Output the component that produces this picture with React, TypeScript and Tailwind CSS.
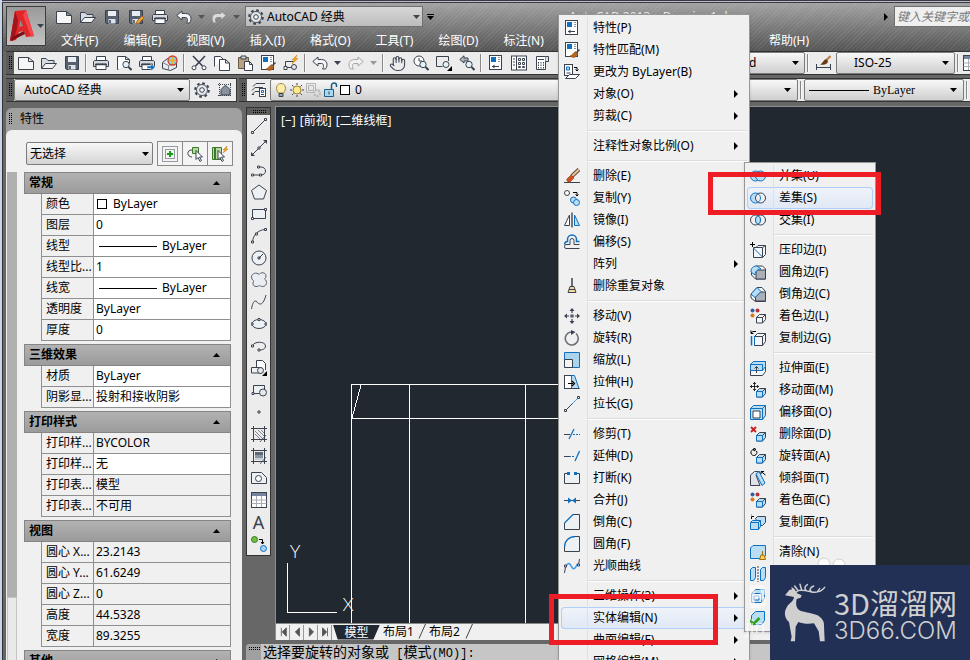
import type { ReactNode } from 'react';
import { Hand } from 'lucide-react';

const D = '#3a4250';
const B = '#0f6fc0';
const L = '#b9def3';

const cube = (
  <>
    <path d="M6.5 9.5l3-3h6v5l-3 3.5h-6z" fill={L} stroke={D} />
    <path d="M6.5 9.5h6v5.5h-6z" fill={L} stroke={B} />
    <path d="M12.5 9.5l3-3" stroke={D} />
  </>
);

const dots = (
  <>
    <circle cx="2.5" cy="2.5" r="2" fill="#2c63a8" stroke="none" />
    <circle cx="7.5" cy="2.5" r="2" fill="#b8323c" stroke="none" />
    <circle cx="2.5" cy="7.5" r="2" fill="#e07818" stroke="none" />
  </>
);

const brush = (
  <>
    <path d="M15.5 7.5l-4 4" stroke={D} strokeWidth="1.5" />
    <path d="M11.5 9.5l2.5 2-2 3c-2 1.5-4 1-6-.5 2-.5 3-3 5.500-4.500z" fill="#b5651d" stroke="#8a4a10" strokeWidth=".5" />
  </>
);

const lens = (
  <>
    <circle cx="10" cy="9.5" r="3.2" fill="#e4f1f5" />
    <path d="M12.5 12l3 3" strokeWidth="2" />
  </>
);

const sheet = (
  <>
    <rect x="1.5" y=".5" width="12" height="14" fill="#fff" />
    <rect x="3" y="2" width="5" height="5" fill={B} stroke="none" />
    <path d="M10 2.5h2M10 4.5h2M10 6.5h2" stroke="#8b95a2" />
  </>
);

const printer = (
  <>
    <path d="M3.5 6V1.5h9V6" fill="#fff" />
    <path d="M.5 6.5l1-1h13l1 1v5h-15z" fill="#d5d9de" />
    <path d="M3 9h10v5.5H3z" fill="#fff" />
    <path d="M2 9.5h12" strokeWidth="1.5" />
  </>
);

const undo = <path d="M6 2L.8 6.5 6 11V8.500h3.500c2.500 0 2.500 3.500 1 5.500h3c3-4 1.500-9.500-4-9.500H6z" fill="#f4f4f4" />;

const floppy = (
  <>
    <path d="M1.5 1.5h13v13h-12l-1-1z" fill="#56606e" />
    <path d="M4 2h8v5H4z" fill="#e9edf1" stroke="none" />
    <path d="M4.5 10h7v4.5h-7z" fill="#dfe3e8" stroke="none" />
    <path d="M6 11v3" strokeWidth="1.5" />
  </>
);

const rings = (
  <>
    <circle cx="5.5" cy="8" r="5" />
    <circle cx="10.5" cy="8" r="5" />
  </>
);

const cubeFace = 'M1.5 5.5l4-4h9v9l-3 4h-10z';

const ICONS: Record<string, ReactNode> = {
  new: <path d="M.5 2.5h10l5 4v8H.5zM10.5 2.5v4h5" fill="#f6f6f6" />,
  open: (
    <>
      <path d="M.5 13V3.5h4.5l2 2h6v3" fill="#d8dce0" />
      <path d="M.5 13.5l4-5h11l-4 5z" fill="#f2f2f2" />
    </>
  ),
  save: floppy,
  saveAs: (
    <>
      {floppy}
      <path d="M8 15l1-3 5-5 2 2-5 5z" fill="#f0a02c" stroke="#9a5a14" strokeWidth=".7" />
    </>
  ),
  print: printer,
  preview: (
    <>
      <path d="M2.5 14.5h-1v-13h8l4 3v4M9.5 1.5v3h4" fill="#fff" />
      {lens}
    </>
  ),
  publish: (
    <>
      {printer}
      <path d="M8 11h4V8.5l4 4-4 3.5v-2.5H8z" fill={B} stroke="#fff" strokeWidth=".5" />
    </>
  ),
  globe: (
    <>
      <path d="M.5 7.5l5-4 9 4v5l-6 3-8-2z" fill="#e8ebee" />
      <path d="M.5 7.5l6 3 8-3M6.5 10.500V15" stroke="#7c8490" />
      <circle cx="10.5" cy="5.5" r="4.5" fill="#7fd0e8" stroke="#d83a2a" strokeWidth="1.3" />
      <path d="M7 5.5h7M10.5 2v7" stroke="#f0b020" strokeWidth="1.3" />
    </>
  ),
  cut: (
    <>
      <path d="M2 1l9.5 10M14 1L4.5 11" strokeWidth="1.6" />
      <circle cx="3" cy="12.8" r="2" fill="#fff" />
      <circle cx="13" cy="12.8" r="2" fill="#fff" />
    </>
  ),
  copy: (
    <>
      <path d="M.5 11.5v-10h6l3 3" fill="#fff" />
      <path d="M5.5 4.5h6l4 3.500v7.500h-10zM11.5 4.5V8h4" fill="#fff" />
    </>
  ),
  paste: (
    <>
      <path d="M1.5 2.5h10v11h-10z" fill="#b9a183" stroke="#6b5a44" />
      <path d="M4 1h5v3H4z" fill="#d0d4d8" />
      <path d="M7.5 6.5h5l3 3v6h-8zM12.5 6.5v3h3" fill="#fff" />
    </>
  ),
  match: (
    <>
      {sheet}
      {brush}
    </>
  ),
  blockEdit: (
    <>
      <path d="M2.5 13V6.5h8" />
      <path d="M2.5 12.5h8" />
      <path d="M1 11.5h3v3H1z" fill="#fff" />
      <circle cx="11" cy="12" r="2.5" fill="#e4e8ec" />
      <path d="M14 0l-5 5h2.500L9 9l6-5.500h-2.500z" fill="#f6a51c" stroke="#c9780a" strokeWidth=".5" />
    </>
  ),
  undo,
  redo: (
    <g transform="matrix(-1 0 0 1 16 0)" stroke="#8c8c8c" opacity=".75">
      {undo}
    </g>
  ),
  gear: (
    <>
      <circle cx="8" cy="8" r="6.8" strokeWidth="2" strokeDasharray="2.7 2.640" />
      <circle cx="8" cy="8" r="5.5" fill="#e6e8ea" strokeWidth=".9" />
      <circle cx="8" cy="8" r="2.3" fill="#f6f6f6" />
    </>
  ),
  zoomLive: (
    <>
      <circle cx="6" cy="6" r="5" fill="#fff" />
      <path d="M6 3v3h3" />
      {lens}
    </>
  ),
  zoomWindow: (
    <>
      <path d="M12.5 6V1.5H.5v10h6" />
      <circle cx="10" cy="9.5" r="3" fill="#e4f1f5" />
      <path d="M16 11v5h-5z" fill="#000" stroke="none" />
    </>
  ),
  zoomPrev: (
    <>
      <path d="M5 .8L.8 4.5 5 8V6h4V3H5z" fill="#aab2bc" />
      {lens}
    </>
  ),
  props: (
    <>
      {sheet}
      <path d="M4 11.5h7" />
      <path d="M6.5 9.5l-2.5 2 2.5 2z" fill={D} stroke="none" />
    </>
  ),
  design: (
    <>
      <rect x=".5" y="1" width="15" height="14" fill="#fff" />
      <path d="M5.5 1v14M2 4h2M2 7h2M2 10h2" />
      <path d="M7.5 3.5h2v2h-2zM11.5 3.5h2v2h-2zM7.5 7.5h2v2h-2zM11.5 7.5h2v2h-2zM7.5 11.5h2v1h-2zM11.5 11.5h2v1h-2z" />
    </>
  ),
  palette: (
    <>
      <path d="M2.5 1.5h9v13h-9z" fill="#fff" />
      <path d="M4 4.5h6" />
      <path d="M11.5 1.500h3v5h-3" fill="#dfe3e8" />
      <path d="M4.5 7v7M7 7v7M9.500 7v7" strokeDasharray="1.500 1" />
    </>
  ),
  house: (
    <>
      <path d="M1 2.5h14M1 13.5h14M2.5 1v14M13.5 1v14" strokeDasharray="1 1" />
      <path d="M4 7.5l4-4 2 1 3 3v5.500H4z" fill="#8a929c" />
    </>
  ),
  layers: (
    <>
      <path d="M2 4.500l3-3h9M1 8.500l3-3h8M3 12.500H1l3-3h4" />
      <rect x="8.5" y="6.5" width="6" height="8" fill="#fff" stroke={D} />
      <path d="M10.500 8.500h2v2h-2z" stroke={B} />
      <path d="M10 12.500h3" />
    </>
  ),
  bulb: (
    <>
      <path d="M5.5 11C2 7 3.500 1.500 8 1.500s6 5.500 2.500 9.500z" fill="#ffeeaa" stroke="#a08436" />
      <path d="M6 11.500h4v3H6z" fill="#9aa2ac" />
    </>
  ),
  sun: (
    <>
      <path d="M8 1v2M8 13v2M1 8h2M13 8h2M3 3l1.500 1.500M11.500 11.500L13 13M13 3l-1.500 1.500M4.500 11.500L3 13" />
      <circle cx="8" cy="8" r="4" fill="#ffe98a" stroke="#a08436" />
    </>
  ),
  freeze: (
    <g stroke="#b5b5b5">
      <path d="M.5 1.500h9v9h-9zM2.500 3.500h5v5h-5z" />
      <circle cx="11" cy="11" r="3" fill="#ddd" strokeWidth="2" strokeDasharray="2 1" />
    </g>
  ),
  lock: (
    <>
      <path d="M8.500 7V3.500a2.500 2.500 0 015 0V5" strokeWidth="1.500" stroke="#1d5f86" />
      <path d="M1.500 7.500h9v7h-9z" fill="#a9d8f0" stroke="#1d5f86" />
      <path d="M6 9.500v3" />
    </>
  ),
  dim: (
    <>
      <path d="M1.5 9v6M15.5 9v6M2 12.5h13" />
      <path d="M15.5 1l-4 4" stroke="#c47a3a" strokeWidth="2" />
      <path d="M11 4l2 2c0 3-4 4.500-8 3.500C8 8.500 8 5 11 4z" fill="#6b3c14" stroke="none" />
    </>
  ),
  table: (
    <>
      <rect x=".5" y=".500" width="15" height="15" fill="#fff" />
      <path d="M1 2.500h14" stroke="#7684a0" strokeWidth="3" />
      <path d="M.5 8h15M.5 11.500h15M5.5 4v11M10.5 4v11" stroke="#a6adb6" />
    </>
  ),
  pick: (
    <>
      <path d="M.5 15.5V.5h15v15z" strokeDasharray="1 1" />
      <path d="M3.5 3.5h9v9h-9z" strokeDasharray="1 1" />
      <path d="M8 5v6M5 8h6" stroke="#11a011" strokeWidth="2" />
    </>
  ),
  select: (
    <>
      <path d="M5.5 1.5h6v6h-6z" fill="#b9d8a4" stroke="#3a7a2a" />
      <path d="M5 4C-1 4 0 11 5 11" />
      <path d="M9 4.5v9l2-2 2 4 1.500-1-2-3.500h3z" fill="#fff" />
    </>
  ),
  quick: (
    <>
      <path d="M.5 1.5h9v12h-9z" fill="#b9d8a4" stroke="#3a7a2a" />
      <path d="M3 2v11" stroke="#3a7a2a" strokeWidth="2" />
      <path d="M15 0l-4 4h2l-2 3 5-4h-2z" fill="#f6a51c" stroke="#c9780a" strokeWidth=".5" />
      <path d="M6 4.5v9l2-2 2 4 1.500-1-2-3.500h3z" fill="#fff" />
    </>
  ),
  // draw toolbar
  line: (
    <>
      <path d="M1.5 14.5l13-13" />
      <path d="M.5 13.5h2v2h-2zM13.500.500h2v2h-2z" fill="#fff" />
    </>
  ),
  xline: (
    <>
      <path d="M2 14L14 2" />
      <path d="M0 16v-4l4 4zM16 0v4l-4-4z" fill={D} stroke="none" />
      <path d="M7 7h2v2H7z" fill="#fff" />
    </>
  ),
  pline: (
    <>
      <path d="M1 13h9c6 0 6-8 0-8H8" />
      <path d="M.5 12h2v2h-2zM8.500 12h2v2h-2zM6.500 4h2v2h-2z" fill="#fff" />
    </>
  ),
  polygon: <path d="M8 1l7.500 5.500-3 8.500h-9l-3-8.500z" fill="#eef1f4" />,
  rect: (
    <>
      <path d="M1.5 3.5h13v9h-13z" fill="#eef1f4" />
      <path d="M.5 11.5h2v2h-2zM13.500 2.500h2v2h-2z" fill="#fff" />
    </>
  ),
  arc: (
    <>
      <path d="M1.5 14C2 7 7 2 14 1.500" />
      <path d="M.5 13h2v2h-2zM13.500.500h2v2h-2zM4.500 5h2v2h-2z" fill="#fff" />
    </>
  ),
  circle: (
    <>
      <circle cx="8" cy="8" r="7" fill="#eef1f4" />
      <path d="M8 8l4-4M7 7h2v2H7z" />
    </>
  ),
  cloud: <path d="M8 2.500C9.500 0 15 0 15 4c0 2-1.500 3-1.500 3s2 1 2 3.500c0 4-4.500 5-7 3-3 2-7 1-6.500-2.500C2.200 9.500 3 9 3 9S.5 8 .5 5C.5 1 6 0 8 2.500z" fill="#eaedf1" stroke="#5c6470" />,
  spline: <path d="M.5 15c1-6 3-10 5.500-7s6 4 9-7" />,
  ellipse: (
    <>
      <ellipse cx="8" cy="8" rx="7" ry="4.5" fill="#eef1f4" />
      <path d="M0 7h2v2H0zM14 7h2v2h-2zM7 2.500h2v2H7z" fill="#fff" />
    </>
  ),
  earc: (
    <>
      <path d="M1.5 8c1-5 13-5 13 0 0 3-3 4-6 4" />
      <path d="M.5 7h2v2h-2zM7 11h2v2H7z" fill="#fff" />
    </>
  ),
  insert: (
    <>
      <path d="M5.5 7V.500h6l3 3V10" fill="#fff" />
      <path d="M.5 13V7.500h10v5.500z" fill="#eef1f4" />
      <circle cx="9.5" cy="10.5" r="3" fill="#e4e8ec" />
      <path d="M16 11v5h-5z" fill="#000" stroke="none" />
    </>
  ),
  block: (
    <>
      <path d="M2.5 3.5h11v8h-11z" fill="#eef1f4" />
      <circle cx="12" cy="10.5" r="3.5" fill="#e4e8ec" />
      <path d="M1 10.5h2v2H1z" fill="#fff" />
    </>
  ),
  point: <path d="M7 7h2v2H7z" />,
  hatch: (
    <>
      <path d="M0 2.5h16M0 13.5h16M2.5 0v16M13.5 0v16" />
      <path d="M4 5l8 8M4 8l5 5M7 4l6 6M10 4l3 3" strokeWidth=".6" />
      <path d="M9 16l6-7" strokeWidth=".8" />
    </>
  ),
  gradient: (
    <>
      <path d="M0 2.5h16M0 13.5h16M2.5 0v16M13.5 0v16" />
      <path d="M4 4h8v3H4z" fill="#5d6672" stroke="none" />
      <path d="M4 7h8v3H4z" fill="#8d959f" stroke="none" />
      <path d="M4 10h8v2H4z" fill="#c8ced5" stroke="none" />
      <path d="M9 16l6-7" strokeWidth=".8" />
    </>
  ),
  region: (
    <>
      <path d="M.5 2.5h10l5 5v6H.5z" fill="#eef1f4" />
      <circle cx="7.5" cy="8.5" r="3" fill="#fff" />
    </>
  ),
  add: (
    <>
      <circle cx="3.5" cy="3.5" r="3" fill="#6fbf3f" stroke="#3a7a2a" />
      <path d="M8 3.5h3.500V8M10 6l1.500 2L13 6" stroke="#000" />
      <circle cx="12.5" cy="12.5" r="3" fill="#a4d3f3" stroke={B} />
    </>
  ),
  // context menu
  byLayer: (
    <>
      <rect x=".5" y=".5" width="8" height="11" fill="#fff" />
      <path d="M2.500 3h3v3h-3z" fill={L} stroke={B} />
      <path d="M2.500 9h4" />
      <path d="M10 3.5h3V7M11.500 5.500L13 7l1.500-1.500" stroke="#000" />
      <path d="M1.500 14.500l4-4h10l-4 4z" fill="#fff" />
    </>
  ),
  erase: (
    <>
      <path d="M0 14.5h16" />
      <path d="M15 1.500L8 8" stroke="#5a4632" strokeWidth="4" />
      <path d="M15 1.500L8 8" stroke="#e8c49c" strokeWidth="2" />
      <path d="M7 7l3 3-4 4c-1.500 1-4-1.500-3-3z" fill="#d0501e" stroke="#8a3210" strokeWidth=".6" />
    </>
  ),
  duplicate: (
    <>
      <circle cx="3" cy="3" r="2.5" fill="#fff" />
      <path d="M9 2.500h4V6M11.500 4.500L13 6l1.500-1.500" stroke="#000" />
      <circle cx="9.5" cy="10" r="3" fill={L} stroke={B} />
      <circle cx="12.5" cy="12.5" r="3" fill={L} stroke={B} />
    </>
  ),
  mirror: (
    <>
      <path d="M5.5 3v10.500h-5z" fill="#fff" />
      <path d="M8 .5v15" stroke="#000" />
      <path d="M10.5 3v10.500h5z" fill={L} stroke={B} />
    </>
  ),
  offset: (
    <>
      <path d="M15.500 10.500H10V6.500a2 2 0 00-4 0v4H2q-1.500 0-1.500 2t1.500 2h13.500" />
      <path d="M.5 10.500q0-3 3-3V5.500a4.500 4.500 0 019 0v2h3" stroke={B} strokeWidth="1.500" />
    </>
  ),
  broom: (
    <>
      <path d="M8 0v8" strokeWidth="1.5" />
      <path d="M6 8.500h4l2 6H4z" fill="#f6d898" />
      <path d="M5 11.500h6" />
    </>
  ),
  move: (
    <>
      <path d="M8 2v3M8 11v3M2 8h3M11 8h3M7 7h2v2H7z" strokeWidth="1.200" />
      <path d="M8 0l2.500 3h-5zM8 16l2.500-3h-5zM0 8l3-2.500v5zM16 8l-3-2.500v5z" fill={D} stroke="none" />
    </>
  ),
  rotate: (
    <>
      <path d="M7 2A6.500 6.500 0 1012 3.500" stroke="#6a7078" strokeWidth="1.6" />
      <path d="M7 0l4.500 2L7 5z" fill={D} stroke="none" />
    </>
  ),
  scale: (
    <>
      <path d="M.5.500h15v15H.5z" fill="#a9d4ec" stroke={B} />
      <path d="M.5 7.500h8v8h-8z" fill="#f4f4f4" />
    </>
  ),
  stretch: (
    <>
      <path d="M.5 1.500h7v13h-7z" fill="#fff" />
      <path d="M7.500 1.500h3l4.500 13H7.500z" fill={L} stroke={B} />
      <path d="M.5 1.500h7M.5 1v14M.5 14.500h15" />
      <path d="M4 9.500h5M8 7l2.500 2.500L8 12" stroke="#000" strokeWidth="1.200" />
    </>
  ),
  lengthen: (
    <>
      <path d="M2 14l6-6" />
      <path d="M8 8l6-6" stroke={B} strokeDasharray="2 1" />
      <path d="M.5 13.5h2v2h-2zM13.500.500h2v2h-2z" fill="#fff" />
    </>
  ),
  trim: (
    <>
      <path d="M0 8.500h6" />
      <path d="M5 13L10 3" stroke={B} strokeWidth="1.3" />
      <path d="M9 8.500h7" stroke={B} strokeDasharray="2 1" />
    </>
  ),
  extend: (
    <>
      <path d="M0 8.500h5" />
      <path d="M5 8.500h6" stroke={B} strokeDasharray="2 1" />
      <path d="M11 13l4.500-10" stroke={B} strokeWidth="1.3" />
    </>
  ),
  break: (
    <>
      <path d="M4 3.500H.5v10h15v-10H12" fill="#eef1f4" />
      <path d="M3 2h3v3H3zM10 2h3v3h-3z" fill={B} stroke="none" />
    </>
  ),
  join: (
    <>
      <path d="M0 8.500h16" />
      <path d="M4 5.500l4 3-4 3zM12 5.500l-4 3 4 3z" fill={B} stroke="none" />
    </>
  ),
  chamfer: (
    <>
      <path d="M.5 9v6.500h15V.5H9" fill="#eef1f4" />
      <path d="M.5 9L9 .5" stroke={B} strokeWidth="1.3" />
    </>
  ),
  fillet: (
    <>
      <path d="M.5 11v4.500h15V.5H11" fill="#eef1f4" />
      <path d="M.5 11C.5 5 5 .5 11 .5" stroke={B} strokeWidth="1.3" />
    </>
  ),
  blend: (
    <>
      <path d="M.5 15l1-6M15.500 1l-1 6" />
      <path d="M2 8c5-8 5 6 9 2 2-2 1-3 3-4" stroke="#3b9be8" strokeWidth="1.5" />
      <path d="M.5 7h2v2h-2zM13.500 6h2v2h-2z" fill="#fff" />
    </>
  ),
  // solid editing
  union: (
    <g fill={L} stroke={B}>
      {rings}
    </g>
  ),
  subtract: (
    <>
      <circle cx="5.5" cy="8" r="5" fill={L} stroke={B} />
      <circle cx="10.5" cy="8" r="5" fill="#f0f0f0" />
      <path d="M8 3.700a5 5 0 010 8.600" stroke={B} />
    </>
  ),
  intersect: (
    <>
      {rings}
      <path d="M8 3.700a5 5 0 010 8.600 5 5 0 010-8.600z" fill={L} stroke={B} />
    </>
  ),
  imprint: (
    <>
      <path d="M3.5 5.5h9v10h-9zM6 5.500l2-2h7.500v9l-3 3M12.500 5.500l3-2" fill="#f4f6f8" />
      <path d="M3.5 6l9 9" stroke={B} />
      <path d="M2.500 0v5M0 2.500h5" stroke="#000" />
    </>
  ),
  filletEdge: (
    <>
      <path d="M1.5 6l4-4h7l3 3v10h-10l-4-4z" fill="#f4f6f8" />
      <path d="M6 15V9c0-2 1-3 3-3h6.500v9z" fill="#aab0b8" />
      <path d="M1 8c0-4 2-6 6-6l4 3c-4 0-6 3-6 6z" fill={L} stroke={B} />
    </>
  ),
  chamferEdge: (
    <>
      <path d="M1 8l6-6.500h5l3.500 4v10h-10L1 12z" fill="#f4f6f8" />
      <path d="M5.500 15v-4l5-5h5v9z" fill="#aab0b8" />
      <path d="M1 8l6-6.500 4 4-6 6z" fill={L} stroke={B} />
    </>
  ),
  colorEdge: (
    <>
      {dots}
      <path d="M6.500 9.500l3-3h6v5l-3 3.500h-6zM6.500 9.500h6v5.500M12.500 9.500l3-3" fill="#f4f6f8" />
    </>
  ),
  copyEdge: (
    <>
      <path d="M1.500 6v9.500" stroke={B} strokeWidth="1.500" />
      <path d="M4.500 6.500l3-3h8v8l-3 4h-8zM4.500 6.500h8v9M12.500 6.500l3-3" fill="#f4f6f8" />
      <path d="M4.500 6v9.500" stroke={B} />
      <path d="M1 3l2-1.500h3M1 .5v3h2.500" stroke="#000" />
    </>
  ),
  extrudeFace: (
    <>
      <path d="M.5 4.500l3-3h12v10l-3 4H.5z" fill="#f4f6f8" />
      <path d="M.5 4.500l3-3h12v5l-3 4H.5z" fill={L} stroke={B} />
      <path d="M.5 4.500h12v6" stroke={B} />
      <path d="M6.500 13V6.500M4.500 8.500l2-2 2 2" />
    </>
  ),
  moveFace: (
    <>
      {cube}
      <path d="M4.500 0v9M0 4.500h9M3 2l1.500-1.500L6 2M3 7l1.500 1.500L6 7M2 3L.5 4.500 2 6M7 3l1.500 1.500L7 6" stroke="#000" strokeWidth=".8" />
    </>
  ),
  offsetFace: (
    <>
      <path d="M.5 4.500l3-3h12v10l-3 4H.5z" fill={L} stroke={B} />
      <path d="M12.500 4.500l3-3M.5 4.500h12v11" stroke={B} />
      <path d="M3 7h7v7H3z" fill="#fff" />
    </>
  ),
  deleteFace: (
    <>
      {cube}
      <path d="M1 1l5 5M6 1L1 6" stroke="#c81e1e" strokeWidth="1.8" />
    </>
  ),
  rotateFace: (
    <>
      {cube}
      <path d="M4 1.500A3 3 0 106.500 3M4 0v3l2-1.500z" stroke="#000" />
    </>
  ),
  taperFace: (
    <>
      <path d="M.5 5l4-3.500h5L6 5l4 10.500H.5z" fill="#dfe3e8" />
      <path d="M6 4l3-2.500L15 13l-3 2.500z" fill={L} stroke={B} />
      <path d="M15.5 5L11 1.500M11 4V1.500h3" stroke="#000" />
    </>
  ),
  colorFace: (
    <>
      {cube}
      {dots}
    </>
  ),
  copyFace: (
    <>
      <path d="M5.500 4.500l2-2h8v6l-3 3h-3z" fill={L} stroke={D} />
      <path d="M.5 8.500l2-2h8v6l-2 3h-8zM.5 8.500h8v7M8.500 8.500l2-2" fill={L} stroke={B} />
      <path d="M1.500 5V2.500H4M1 1h.5" stroke="#000" />
    </>
  ),
  clean: (
    <>
      <path d="M.5 4l2.500-2.500h12.500v10l-2 3H.5z" fill={L} stroke={B} />
      <path d="M12.500 7v4M11 11h3l1.500 4.500h-6z" fill="#ffd04a" stroke="#a0700a" />
    </>
  ),
  separate: (
    <>
      <path d="M.5 3.500l2-2h3v10l-2 3h-3zM10.500 3.500l2-2h3v10l-2 3h-3z" fill={L} stroke={B} />
      <path d="M8 0v16" strokeDasharray="2 1" />
    </>
  ),
  shell: (
    <>
      <path d={cubeFace} fill={L} stroke={B} />
      <path d="M1.500 5.500h10v9M4 8h5v4H4z" fill="#e8f2f8" stroke={B} />
    </>
  ),
  check: (
    <>
      <path d={cubeFace} fill={L} stroke={B} />
      <path d="M0 10l3.500 4 6-6" stroke="#2fa01e" strokeWidth="2.5" />
    </>
  ),
};

function Icon({ name }: { name: string }) {
  return (
    <svg width="16" height="16" viewBox="0 0 16 16" fill="none" stroke={D} strokeWidth="1" className="shrink-0" aria-hidden="true">
      {ICONS[name]}
    </svg>
  );
}

function Down({ className = 'text-black' }: { className?: string }) {
  return (
    <svg width="7" height="4" viewBox="0 0 7 4" className={`shrink-0 ${className}`} aria-hidden="true">
      <path d="M0 0h7L3.5 4z" fill="currentColor" />
    </svg>
  );
}

function ToolButton({ name, label }: { name: string; label: string }) {
  return (
    <button type="button" aria-label={label} className="flex h-[22px] w-[23px] shrink-0 items-center justify-center">
      {name === 'hand' ? <Hand size={17} strokeWidth={1.5} color={D} /> : <Icon name={name} />}
    </button>
  );
}

function Arrow({ dim }: { dim?: boolean }) {
  return (
    <button type="button" aria-label="展开" className="flex h-[22px] w-[13px] shrink-0 items-center justify-center">
      <Down className={dim ? 'text-[#999]' : 'text-[#3a4250]'} />
    </button>
  );
}

function Divider() {
  return <div className="mx-[2px] h-[18px] w-[2px] shrink-0 border-l border-[#888] bg-[#f8f8f8]" />;
}

const DOTS = 'shrink-0 bg-[conic-gradient(#000_25%,transparent_0)] bg-[length:2px_2px]';

function Grip() {
  return (
    <div className="flex w-2 shrink-0 items-center justify-center self-stretch bg-[#5c5c5c]">
      <div className={`h-[14px] w-1 ${DOTS}`} />
    </div>
  );
}

function Combo({ label, value, className }: { label: string; value: string; className: string }) {
  return (
    <div className={`relative shrink-0 ${className}`}>
      <select
        aria-label={label}
        className="block h-[22px] w-full appearance-none rounded-xs border border-[#7c7c7c] bg-linear-to-b from-[#f8f8f8] to-[#cfcfcf] text-black outline-none"
      >
        <option>{value}</option>
      </select>
      <span className="pointer-events-none absolute inset-y-0 right-[6px] flex items-center">
        <Down />
      </span>
    </div>
  );
}

const MENUS = ['文件(F)', '编辑(E)', '视图(V)', '插入(I)', '格式(O)', '工具(T)', '绘图(D)', '标注(N)'];

const TOOLS = [
  ['new', '新建'], ['open', '打开'], ['save', '保存'], ['|', ''],
  ['print', '打印'], ['preview', '预览'], ['publish', '发布'], ['globe', '三维打印'], ['|', ''],
  ['cut', '剪切'], ['copy', '复制'], ['paste', '粘贴'], ['match', '特性匹配'], ['blockEdit', '块编辑器'], ['|', ''],
  ['undo', '放弃'], ['v', ''], ['redo', '重做'], ['V', ''], ['|', ''],
  ['hand', '平移'], ['zoomLive', '实时缩放'], ['zoomWindow', '窗口缩放'], ['zoomPrev', '缩放上一个'], ['|', ''],
  ['props', '特性'], ['design', '设计中心'], ['palette', '工具选项板'],
];

const DRAW = ['line', 'xline', 'pline', 'polygon', 'rect', 'arc', 'circle', 'cloud', 'spline', 'ellipse', 'earc', 'insert', 'block', 'point', 'hatch', 'gradient', 'region', 'table', 'A', 'add'];

type Row = [name: string, value: string, kind?: 'swatch' | 'line' | 'readonly'];

const SECTIONS: { title: string; rows: Row[] }[] = [
  {
    title: '常规',
    rows: [
      ['颜色', 'ByLayer', 'swatch'],
      ['图层', '0'],
      ['线型', 'ByLayer', 'line'],
      ['线型比...', '1'],
      ['线宽', 'ByLayer', 'line'],
      ['透明度', 'ByLayer'],
      ['厚度', '0'],
    ],
  },
  { title: '三维效果', rows: [['材质', 'ByLayer'], ['阴影显...', '投射和接收阴影']] },
  {
    title: '打印样式',
    rows: [
      ['打印样...', 'BYCOLOR', 'readonly'],
      ['打印样...', '无'],
      ['打印表...', '模型', 'readonly'],
      ['打印表...', '不可用', 'readonly'],
    ],
  },
  {
    title: '视图',
    rows: [
      ['圆心 X...', '23.2143', 'readonly'],
      ['圆心 Y...', '61.6249', 'readonly'],
      ['圆心 Z...', '0', 'readonly'],
      ['高度', '44.5328', 'readonly'],
      ['宽度', '89.3255', 'readonly'],
    ],
  },
  { title: '其他', rows: [] },
];

type Item = { icon?: string; text: string; sub?: boolean; active?: boolean } | null;

const CONTEXT: Item[] = [
  { icon: 'props', text: '特性(P)' },
  { icon: 'match', text: '特性匹配(M)' },
  { icon: 'byLayer', text: '更改为 ByLayer(B)' },
  { text: '对象(O)', sub: true },
  { text: '剪裁(C)', sub: true },
  null,
  { text: '注释性对象比例(O)', sub: true },
  null,
  { icon: 'erase', text: '删除(E)' },
  { icon: 'duplicate', text: '复制(Y)' },
  { icon: 'mirror', text: '镜像(I)' },
  { icon: 'offset', text: '偏移(S)' },
  { text: '阵列', sub: true },
  { icon: 'broom', text: '删除重复对象' },
  null,
  { icon: 'move', text: '移动(V)' },
  { icon: 'rotate', text: '旋转(R)' },
  { icon: 'scale', text: '缩放(L)' },
  { icon: 'stretch', text: '拉伸(H)' },
  { icon: 'lengthen', text: '拉长(G)' },
  null,
  { icon: 'trim', text: '修剪(T)' },
  { icon: 'extend', text: '延伸(D)' },
  { icon: 'break', text: '打断(K)' },
  { icon: 'join', text: '合并(J)' },
  { icon: 'chamfer', text: '倒角(C)' },
  { icon: 'fillet', text: '圆角(F)' },
  { icon: 'blend', text: '光顺曲线' },
  null,
  { text: '三维操作(3)', sub: true },
  { text: '实体编辑(N)', sub: true, active: true },
  { text: '曲面编辑(F)', sub: true },
  { text: '网格编辑(M)', sub: true },
];

const SOLID: Item[] = [
  { icon: 'union', text: '并集(U)' },
  { icon: 'subtract', text: '差集(S)', active: true },
  { icon: 'intersect', text: '交集(I)' },
  null,
  { icon: 'imprint', text: '压印边(I)' },
  { icon: 'filletEdge', text: '圆角边(F)' },
  { icon: 'chamferEdge', text: '倒角边(C)' },
  { icon: 'colorEdge', text: '着色边(L)' },
  { icon: 'copyEdge', text: '复制边(G)' },
  null,
  { icon: 'extrudeFace', text: '拉伸面(E)' },
  { icon: 'moveFace', text: '移动面(M)' },
  { icon: 'offsetFace', text: '偏移面(O)' },
  { icon: 'deleteFace', text: '删除面(D)' },
  { icon: 'rotateFace', text: '旋转面(A)' },
  { icon: 'taperFace', text: '倾斜面(T)' },
  { icon: 'colorFace', text: '着色面(C)' },
  { icon: 'copyFace', text: '复制面(F)' },
  null,
  { icon: 'clean', text: '清除(N)' },
  { icon: 'separate', text: '' },
  { icon: 'shell', text: '' },
  { icon: 'check', text: '' },
];

function Menu({ items, className }: { items: Item[]; className: string }) {
  return (
    <ul role="menu" className={`absolute border border-[#979797] bg-[#f0f0f0] p-[2px] text-black shadow-sm ${className}`}>
      {items.map((item, i) =>
        item ? (
          <li key={i} role="none">
            <button
              type="button"
              role="menuitem"
              className={`flex h-[22px] w-full items-center rounded-sm text-left ${item.active ? 'bg-linear-to-b from-[#f0f3f9] to-[#dfe8f5] ring-1 ring-[#aecff7] ring-inset' : ''}`}
            >
              <span className="flex h-full w-[27px] shrink-0 items-center border-r border-[#e0e0e0] pl-[3px]">{item.icon && <Icon name={item.icon} />}</span>
              <span className="flex-1 pl-[5px] whitespace-nowrap">{item.text}</span>
              {item.sub && (
                <svg width="4" height="8" viewBox="0 0 4 8" className="mr-[9px]" aria-hidden="true">
                  <path d="M0 0l4 4-4 4z" />
                </svg>
              )}
            </button>
          </li>
        ) : (
          <li key={i} role="separator" className="flex h-2 items-center">
            <span className="h-full w-[27px] shrink-0 border-r border-[#e0e0e0]" />
            <span className="h-[2px] flex-1 border-t border-[#dcdcdc] bg-white" />
          </li>
        ),
      )}
    </ul>
  );
}

function TitleBar() {
  return (
    <header className="flex h-12 shrink-0 bg-[repeating-linear-gradient(135deg,rgba(255,255,255,0.07)_0_1px,transparent_1px_3px),linear-gradient(#a2a2a2,#545454)] text-white">
      <button type="button" aria-label="应用程序菜单" className="mt-[3px] ml-[3px] flex h-10 w-10 shrink-0 items-center gap-[2px] border border-[#3c3c3c] bg-linear-to-b from-[#9a9a9a] to-[#c4c4c4] pl-[3px]">
        <svg width="25" height="34" viewBox="0 0 25 34" aria-hidden="true">
          <path d="M5 2l11-1 8 26-8 1-2-6-5 1-3 8-6 1z" fill="#e0252b" />
          <path d="M5 2l3 9-1 9-4 12-3-1z" fill="#a3151b" />
          <path d="M16 1l8 26-3 1L13 6z" fill="#f2484c" />
          <path d="M10.500 11l2.500 6-4 1z" fill="#8d8d8d" />
          <path d="M0 32l4-5 10-5 1 3-10 5z" fill="#7d0d12" />
        </svg>
        <Down className="text-[#3a4250]" />
      </button>
      <div className="flex min-w-0 flex-1 flex-col pl-[6px]">
        <div className="flex h-[27px] items-center">
          {[['new', '新建'], ['open', '打开'], ['save', '保存'], ['saveAs', '另存为'], ['print', '打印'], ['undo', '放弃']].map(([name, label]) => (
            <button key={name} type="button" aria-label={label} className="flex w-6 shrink-0 items-center justify-center">
              <Icon name={name} />
            </button>
          ))}
          <Down className="mx-[2px] text-[#555]" />
          <button type="button" aria-label="重做" className="flex w-6 shrink-0 items-center justify-center">
            <Icon name="redo" />
          </button>
          <Down className="mx-[2px] text-[#555]" />
          <div className="ml-[3px] flex h-[21px] w-[178px] shrink-0 items-center border border-[#707070] bg-linear-to-b from-[#d8d8d8] to-[#bcbcbc] px-[2px]">
            <Icon name="gear" />
            <select aria-label="工作空间" className="ml-[3px] h-[19px] flex-1 appearance-none text-black outline-none">
              <option>AutoCAD 经典</option>
            </select>
            <Down className="text-[#444]" />
          </div>
          <button type="button" aria-label="自定义快速访问工具栏" className="ml-1 flex flex-col items-center gap-px">
            <span className="h-px w-[7px] bg-black" />
            <Down />
          </button>
          <span className="ml-[135px] whitespace-pre text-[#e8e8e8]">AutoCAD 2013    Drawing1.dwg</span>
          <span className="ml-auto flex items-center gap-[6px]">
            <svg width="4" height="8" viewBox="0 0 4 8" aria-hidden="true">
              <path d="M0 0l4 4-4 4z" />
            </svg>
            <input aria-label="搜索" placeholder="键入关键字或短语" className="h-[21px] w-[76px] border border-r-0 border-[#707070] bg-[#efefef] pl-[2px] italic outline-none placeholder:text-[#777]" />
          </span>
        </div>
        <nav className="flex h-[21px] items-center gap-[25px] pl-[9px]">
          {MENUS.map((m) => (
            <a key={m} href="#" className="shrink-0">
              {m}
            </a>
          ))}
          <a href="#" className="mr-[161px] ml-auto shrink-0">
            帮助(H)
          </a>
        </nav>
      </div>
    </header>
  );
}

function Toolbars() {
  return (
    <>
      <div className="ml-[3px] flex h-6 shrink-0 items-center border-y border-[#333] bg-[#ececec]">
        <Grip />
        {TOOLS.map(([name, label], i) => {
          if (name === '|') return <Divider key={i} />;
          if (name === 'v' || name === 'V') return <Arrow key={i} dim={name === 'V'} />;
          return <ToolButton key={i} name={name} label={label} />;
        })}
        <div className="ml-auto flex items-center">
          <Combo label="文字样式" value="Standard" className="w-[117px] [&>select]:pl-4" />
          <Divider />
          <button type="button" aria-label="标注样式" className="mx-1 flex h-[22px] w-[17px] items-center">
            <Icon name="dim" />
          </button>
          <Combo label="标注样式" value="ISO-25" className="w-[119px] [&>select]:pl-[17px]" />
          <Divider />
          <span className="flex w-[9px] overflow-hidden pl-[2px]">
            <Icon name="table" />
          </span>
        </div>
      </div>
      <div className="mt-[3px] ml-[3px] flex h-6 shrink-0 items-center">
        <div className="mr-[2px] flex h-full items-center border-y border-r border-[#333] bg-[#ececec]">
          <Grip />
          <Combo label="工作空间" value="AutoCAD 经典" className="w-[176px] [&>select]:pl-[9px]" />
          <ToolButton name="gear" label="工作空间设置" />
          <ToolButton name="house" label="我的工作空间" />
        </div>
        <div className="flex h-full min-w-0 flex-1 items-center border-y border-[#333] bg-[#ececec]">
          <Grip />
          <ToolButton name="layers" label="图层特性管理器" />
          <button type="button" className="flex h-[22px] min-w-0 flex-1 items-center rounded-xs border border-[#7c7c7c] bg-linear-to-b from-[#f8f8f8] to-[#cfcfcf] pr-[6px] pl-[2px] text-black">
            <Icon name="bulb" />
            <Icon name="sun" />
            <span className="mx-px">
              <Icon name="freeze" />
            </span>
            <Icon name="lock" />
            <span className="ml-px h-[10px] w-[10px] border border-black bg-white" />
            <span className="mr-auto ml-[5px]">0</span>
            <Down />
          </button>
          <Divider />
          <button type="button" className="flex h-[22px] w-[160px] shrink-0 items-center rounded-xs border border-[#7c7c7c] bg-linear-to-b from-[#f8f8f8] to-[#cfcfcf] pr-[6px] pl-1 font-['Liberation_Serif',serif] text-black">
            <span className="h-px w-[60px] bg-black" />
            <span className="mr-auto ml-1">ByLayer</span>
            <Down />
          </button>
          <Divider />
        </div>
      </div>
    </>
  );
}

function PropertiesPanel() {
  return (
    <aside className="mt-[2px] flex w-[236px] shrink-0 flex-col overflow-hidden rounded-t-md bg-[#a0a0a0] text-black">
      <h2 className="flex h-[22px] shrink-0 items-center gap-2 pl-[2px]">
        <span className={`h-3 w-1 ${DOTS}`} />
        特性
      </h2>
      <div className="flex min-h-0 flex-1 flex-col rounded-t-md bg-[#f0f0f0]">
        <div className="mt-[11px] flex items-center pr-[9px] pl-5">
          <div className="relative mr-[5px] flex-1">
            <select aria-label="选择" className="block h-[23px] w-full appearance-none rounded-xs border border-[#7c7c7c] bg-linear-to-b from-[#f8f8f8] to-[#d4d4d4] pl-[3px] outline-none">
              <option>无选择</option>
            </select>
            <span className="pointer-events-none absolute inset-y-0 right-1 flex items-center">
              <Down />
            </span>
          </div>
          {[['pick', '切换 PICKADD'], ['select', '选择对象'], ['quick', '快速选择']].map(([name, label]) => (
            <button key={name} type="button" aria-label={label} className="-ml-px flex h-[25px] w-[26px] items-center justify-center border border-[#8a8a8a] bg-[#f4f4f4]">
              <Icon name={name} />
            </button>
          ))}
        </div>
        <div className="mt-[6px] flex min-h-0 flex-1">
          <div className="mr-[7px] ml-px flex w-[10px] shrink-0 flex-col bg-[#b0b0b0]">
            <div className="h-[87%]" />
            <div className="flex-1 border border-b-0 border-[#c4c4c4] bg-[#e9e9e9]" />
          </div>
          <div className="mr-[11px] min-w-0 flex-1">
            {SECTIONS.map((s) => (
              <section key={s.title} className="mb-[3px]">
                <h3 className="flex h-[22px] items-center justify-between border border-[#858585] bg-linear-to-b from-[#b2b2b2] to-[#9b9b9b] pr-[10px] pl-1 font-bold">
                  {s.title}
                  <svg width="7" height="4" viewBox="0 0 7 4" aria-hidden="true">
                    <path d="M0 4h7L3.5 0z" />
                  </svg>
                </h3>
                <table className="ml-[17px] w-[calc(100%-17px)] table-fixed border-separate border-spacing-0 border-l border-[#8f8f8f]">
                  <tbody>
                    {s.rows.map(([name, value, kind], i) => (
                      <tr key={i} className="h-[21px]">
                        <th scope="row" className="w-[52px] border-r border-b border-[#8f8f8f] p-0 pl-1 text-left font-normal whitespace-nowrap">
                          {name}
                        </th>
                        <td className={`border-r border-b border-[#8f8f8f] p-0 pl-[2px] ${kind === 'readonly' ? '' : 'bg-white'}`}>
                          <span className="flex items-center">
                            {kind === 'swatch' && <span className="mr-[6px] ml-px h-[10px] w-[10px] border border-black" />}
                            {kind === 'line' && <span className="mr-[5px] ml-[3px] h-px w-[58px] bg-black" />}
                            {value}
                          </span>
                        </td>
                      </tr>
                    ))}
                  </tbody>
                </table>
              </section>
            ))}
          </div>
        </div>
      </div>
    </aside>
  );
}

function Slash() {
  return (
    <svg width="10" height="16" viewBox="0 0 10 16" fill="none" stroke="#444" className="shrink-0" aria-hidden="true">
      <path d="M8.5 0L2 14.5" />
    </svg>
  );
}

function DrawingArea() {
  return (
    <div className="ml-1 flex min-w-0 flex-1 flex-col border-t border-l border-[#8f8f8f] bg-[#212830] text-white">
      <div className="relative min-h-0 flex-1 overflow-hidden">
        <svg className="absolute inset-0 h-full w-full" fill="none" stroke="#fff" shapeRendering="crispEdges" aria-label="二维线框">
          <path d="M75.5 516V277.5H290M75.5 311.5H290M133.5 277v239M249.5 277v239M76 311l9-33" />
          <path d="M11.5 456v49.500h49" />
          <g fill="#fff" stroke="none" fontSize="18" fontFamily="Lato" fontWeight="300" textAnchor="middle">
            <text x="19" y="451">Y</text>
            <text x="72" y="504">X</text>
          </g>
        </svg>
        <div className="relative flex gap-1 pt-[6px] pl-[5px]">
          <button type="button">[−]</button>
          <button type="button">[前视]</button>
          <button type="button">[二维线框]</button>
        </div>
      </div>
      <div className="flex h-[17px] shrink-0 items-center border-t border-[#888] bg-[#f0f0f0] text-black">
        {['M4 1v10M10 1v10L5 6z', 'M9 1v10L4 6z', 'M4 1v10l5-5z', 'M9 1v10M3 1v10l5-5z'].map((d, i) => (
          <button key={d} type="button" aria-label={['第一个', '上一个', '下一个', '最后一个'][i]} className="flex h-[15px] w-[14px] shrink-0 items-center justify-center border-r border-[#999]">
            <svg width="10" height="10" viewBox="0 0 12 12" fill="#555" stroke="#555" strokeWidth="1" aria-hidden="true">
              <path d={d} />
            </svg>
          </button>
        ))}
        <button type="button" className="ml-px h-[15px] w-[47px] shrink-0 bg-[#212830] leading-4 text-white [clip-path:polygon(0_0,100%_0,86%_100%,10%_100%)]">
          模型
        </button>
        <button type="button" className="ml-[3px] leading-4">布局1</button>
        <span className="ml-[3px]">
          <Slash />
        </span>
        <button type="button" className="ml-[2px] leading-4">布局2</button>
        <span className="ml-1">
          <Slash />
        </span>
      </div>
    </div>
  );
}

function SiteLogo() {
  return (
    <div className="absolute right-0 bottom-0 flex h-[95px] w-[200px] items-center bg-[#223055] pl-3 text-[#cfcfcf]">
      <svg width="45" height="59" viewBox="125 669 135 177" fill="currentColor" aria-hidden="true">
        <path d="M134 706l13-16 8-2-2-8 10 8 7 12 14 6-3 7-12 4c-3 14-2 26 8 34 18 8 46 8 61 19 10 8 14 16 13 28l2 46h-14l-4-30-14-24c-14 2-34 2-47-4l-8 14-2 44h-13l3-14-8-44c-14-12-16-31-6-46 8-12 20-16 21-29z" />
        <g fill="none" stroke="currentColor" strokeWidth="4.500" strokeLinecap="round">
          <path d="M168 696c8-10 28-4 46 0 14 2 30-2 39-14M172 690l-9-12M184 690l-5-17M198 692c-7-6-5-12 3-18M214 695c-8-4-6-12 6-17M232 694l6-8" />
        </g>
      </svg>
      <div className="ml-[7px] flex flex-col gap-1 pt-[2px] whitespace-nowrap">
        <span className="font-['Noto_Sans_CJK_SC',sans-serif] text-[29px] leading-[30px]">3D溜溜网</span>
        <span className="font-['Inter',sans-serif] text-[24px] leading-5 font-light">3D66.COM</span>
      </div>
    </div>
  );
}

export default function App() {
  return (
    <div className="relative flex h-screen w-full flex-col overflow-hidden border-l-2 border-[#c6d5e8] bg-[#676767] font-['Noto_Sans','Noto_Sans_CJK_SC',sans-serif] text-[12px] leading-4">
      <div className="h-[3px] shrink-0 border-y border-[#3a3a42] bg-[#b9b9c9]" />
      <div className="flex min-h-0 flex-1 flex-col border-l border-[#333]">
        <TitleBar />
        <Toolbars />
        <main className="mt-1 flex min-h-0 flex-1 pl-[3px]">
          <PropertiesPanel />
          <div className="ml-1 flex min-w-0 flex-1 flex-col">
            <div className="flex min-h-0 flex-1 items-stretch">
              <div className="mt-px flex w-[25px] shrink-0 flex-col self-start border border-[#333] bg-[#ececec]">
                <div className="flex h-[7px] items-center justify-center bg-[#5c5c5c]">
                  <div className={`h-1 w-[14px] ${DOTS}`} />
                </div>
                {DRAW.map((name) => (
                  <button key={name} type="button" aria-label={name} className="flex h-[22px] items-center justify-center">
                    {name === 'A' ? <span className="text-[18px] text-[#3a4250]">A</span> : <Icon name={name} />}
                  </button>
                ))}
              </div>
              <DrawingArea />
            </div>
            <div className="mt-1 flex h-4 shrink-0 overflow-hidden rounded-tl-sm bg-[#c6c6c6] text-black">
              <span className="flex w-[15px] shrink-0 justify-center bg-[#a0a0a0] pt-[3px]">
                <span className={`h-1 w-3 ${DOTS}`} />
              </span>
              <span className="pl-[2px] text-[14px] leading-4 whitespace-pre">
                选择要旋转的对象或<span className="font-['Liberation_Mono',monospace] text-[12px]"> [</span>模式
                <span className="font-['Liberation_Mono',monospace] text-[12px]">(MO)]:</span>
              </span>
            </div>
          </div>
        </main>
      </div>

      <Menu items={CONTEXT} className="top-[14px] left-[556px] w-[192px]" />
      <Menu items={SOLID} className="top-[162px] left-[742px] w-[132px]" />

      <div className="absolute top-[172px] left-[706px] h-[43px] w-[173px] border-[5px] border-[#ee1c25]" />
      <div className="absolute top-[594px] left-[547px] h-[51px] w-[169px] border-[5px] border-[#ee1c25]" />

      <div className="absolute top-[580px] left-[745px] text-[32px] leading-8 font-bold text-white/60">B</div>
      <div className="absolute top-[616px] left-[743px] text-[18px] leading-5 text-white/70">jin</div>
      <svg className="absolute top-[557px] left-[814px]" width="32" height="14" viewBox="0 0 32 14" fill="#fff" fillOpacity=".7" stroke="#d0d0d0" aria-hidden="true">
        <circle cx="8" cy="7" r="6" />
        <circle cx="23" cy="8" r="6" />
      </svg>
      <SiteLogo />
    </div>
  );
}
